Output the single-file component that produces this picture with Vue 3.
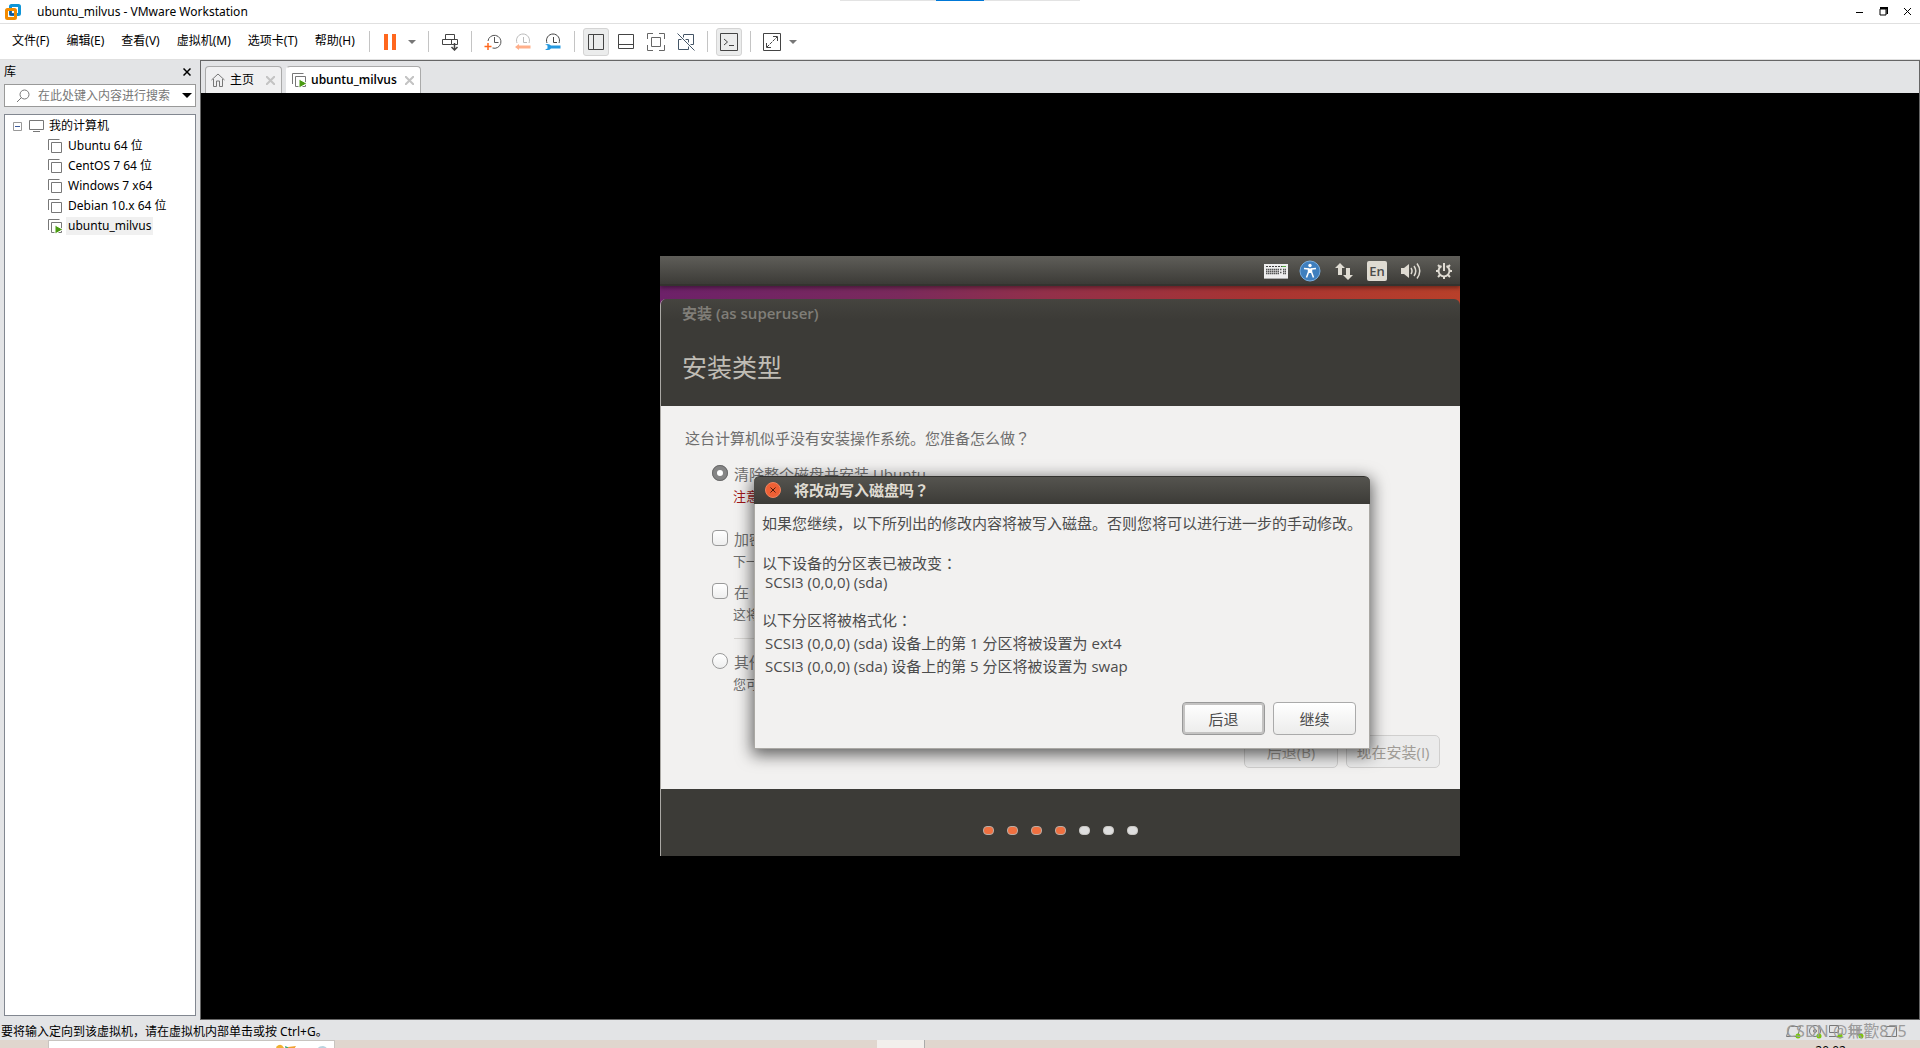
<script setup>
import { ref } from 'vue'

const menus = ['文件(F)', '编辑(E)', '查看(V)', '虚拟机(M)', '选项卡(T)', '帮助(H)']
const machines = [
  { name: 'Ubuntu 64 位', running: false },
  { name: 'CentOS 7 64 位', running: false },
  { name: 'Windows 7 x64', running: false },
  { name: 'Debian 10.x 64 位', running: false },
  { name: 'ubuntu_milvus', running: true }
]
const installType = ref('erase')
const encrypt = ref(false)
const lvm = ref(false)
const steps = 7
const currentStep = 4
</script>

<template>
  <div class="app">
    <div class="snap-bar"><i></i></div>
    <header class="titlebar">
      <svg class="logo" width="18" height="18" viewBox="0 0 18 18" fill="none" stroke-width="3">
        <rect x="6.5" y="2.5" width="9" height="9" rx="1" stroke="#0f95d7" />
        <rect x="2.5" y="6.5" width="9" height="9" rx="1" stroke="#f38b00" />
        <path d="M6.500 8V11.500H10" stroke="#1d4f8c" stroke-width="2" />
      </svg>
      <h1>ubuntu_milvus - VMware Workstation</h1>
      <div class="window-buttons">
        <button aria-label="最小化"><svg width="9" height="9" viewBox="0 0 9 9"><path d="M1 5.500H8" stroke="#000" /></svg></button>
        <button aria-label="还原"><svg width="9" height="9" viewBox="0 0 9 9"><path d="M1 2H7V8H1Z" fill="none" stroke="#000" /><path d="M1 1H8.500V7" fill="none" stroke="#000" stroke-width="2" /></svg></button>
        <button aria-label="关闭"><svg width="9" height="9" viewBox="0 0 9 9"><path d="M1 1L8 8M8 1L1 8" stroke="#000" /></svg></button>
      </div>
    </header>

    <nav class="menubar">
      <div class="menus"><button v-for="m in menus" :key="m">{{ m }}</button></div>
      <span class="sep"></span>
      <button class="tool pause" aria-label="挂起"><svg width="12" height="16" viewBox="0 0 12 16"><path d="M0 0H4V16H0ZM8 0H12V16H8Z" fill="#ff671d" /></svg></button>
      <button class="tool drop" aria-label="电源选项"><svg width="8" height="4" viewBox="0 0 8 4"><path d="M0 0H8L4 4Z" fill="#777" /></svg></button>
      <span class="sep"></span>
      <button class="tool" aria-label="发送 Ctrl+Alt+Del">
        <svg width="18" height="18" viewBox="0 0 18 18" fill="none" stroke="#444"><path d="M4.500 1.500H13.500V6.500H4.500ZM1.500 6.500H10.500V11.500H1.500ZM10.500 6.500H16.500V11.500H10.500" /><path d="M13.500 10V17M10.500 14L13.500 17L16.500 14" stroke-width="1.500" /></svg>
      </button>
      <span class="sep"></span>
      <button class="tool" aria-label="拍摄快照">
        <svg width="20" height="20" viewBox="0 0 20 20" fill="none" stroke="#555"><path d="M5 9A6.500 6.500 0 1 1 9.500 16M11.500 5V10.500H15.500" /><path d="M5 11V18M1.500 14.500H8.500" stroke="#ff671d" stroke-width="1.500" /></svg>
      </button>
      <button class="tool" aria-label="恢复快照">
        <svg width="20" height="20" viewBox="0 0 20 20" fill="none" stroke="#bbb"><path d="M4 11A6.500 6.500 0 1 1 16 11M10.500 5V10.500H14" /><path d="M6 12L2 15L6 18V16.500H17.500V13.500H6Z" fill="#ffaf8a" stroke="none" /></svg>
      </button>
      <button class="tool" aria-label="快照管理器">
        <svg width="20" height="20" viewBox="0 0 20 20" fill="none" stroke="#444"><path d="M4 11A6.500 6.500 0 1 1 16 11M10.500 5V10.500H14" /><path d="M2 12.500Q6 11 8 13.500H17.500V16.500H8Q6 19 2 17.500L4.500 16.500V13.500Z" fill="#2599e0" stroke="none" /></svg>
      </button>
      <span class="sep"></span>
      <button class="tool on" aria-label="显示库"><svg width="18" height="18" viewBox="0 0 18 18" fill="none" stroke="#444"><path d="M1.500 1.500H16.500V16.500H1.500ZM6.500 1.500V16.500" /></svg></button>
      <button class="tool" aria-label="缩略图栏"><svg width="18" height="18" viewBox="0 0 18 18" fill="none" stroke="#444"><path d="M1.500 1.500H16.500V15.500H1.500ZM1.500 11.500H16.500" /></svg></button>
      <button class="tool" aria-label="全屏"><svg width="18" height="18" viewBox="0 0 18 18" fill="none" stroke="#666"><path d="M.500 6V.500H6M12 .500H17.500V6M17.500 12V17.500H12M6 17.500H.500V12M4.500 4.500H13.500V13.500H4.500Z" /></svg></button>
      <button class="tool" aria-label="Unity"><svg width="18" height="18" viewBox="0 0 18 18" fill="none" stroke="#445566"><path d="M7 1.500H16.500V11.500H13M1.500 6.500H11.500V16.500H1.500ZM6.500 6.500V1.500" /><path d="M.500 .500L17.500 17.500" stroke="#fff" stroke-width="3" /><path d="M.500 .500L17.500 17.500" /></svg></button>
      <span class="sep"></span>
      <button class="tool on" aria-label="控制台视图"><svg width="18" height="18" viewBox="0 0 18 18" fill="none" stroke="#444"><path d="M.500 .500H17.500V17.500H.500Z" /><path d="M4 6L7.500 9L4 12M9 12.500H14" /></svg></button>
      <span class="sep"></span>
      <button class="tool" aria-label="拉伸客户机"><svg width="18" height="18" viewBox="0 0 18 18" fill="none" stroke="#444"><path d="M.500 .500H17.500V17.500H.500Z" /><path d="M3.500 10V14.500H8M10 3.500H14.500V8" /><path d="M4 14L14 4" stroke-dasharray="3 1" /></svg></button>
      <button class="tool drop" aria-label="拉伸选项"><svg width="8" height="4" viewBox="0 0 8 4"><path d="M0 0H8L4 4Z" fill="#777" /></svg></button>
    </nav>

    <div class="workspace">
      <aside class="library">
        <div class="library-head">
          <h2>库</h2>
          <button aria-label="关闭库"><svg width="8" height="8" viewBox="0 0 8 8"><path d="M.500 .500L7.500 7.500M7.500 .500L.500 7.500" stroke="#000" stroke-width="1.500" /></svg></button>
        </div>
        <label class="search">
          <svg width="14" height="14" viewBox="0 0 14 14" fill="none" stroke="#777"><circle cx="8.500" cy="5.500" r="4.500" /><path d="M5.500 8.500L1 13" /></svg>
          <input type="text" aria-label="搜索" placeholder="在此处键入内容进行搜索" />
          <svg width="10" height="5" viewBox="0 0 10 5"><path d="M0 0H10L5 5Z" fill="#000" /></svg>
        </label>
        <div class="tree">
          <div class="root">
            <svg width="9" height="9" viewBox="0 0 9 9" fill="#fff" stroke="#999"><path d="M.500 .500H8.500V8.500H.500Z" /><path d="M2 4.500H7" stroke="#3a5a9c" /></svg>
            <svg width="15" height="12" viewBox="0 0 15 12" fill="none" stroke="#777"><path d="M.500 .500H14.500V9.500H.500ZM4 11.500H11" /></svg>
            <span>我的计算机</span>
          </div>
          <ul>
            <li v-for="m in machines" :key="m.name">
              <svg width="15" height="15" viewBox="0 0 15 15" fill="none" stroke="#777"><path d="M.500 11V.500H11.500M3.500 3.500H13.500V13.500H3.500Z" /><path v-if="m.running" d="M7 6L15 10.500L7 15Z" fill="#4a9a12" stroke="#fff" /></svg>
              <span :class="{ selected: m.running }">{{ m.name }}</span>
            </li>
          </ul>
        </div>
      </aside>

      <main class="stage">
        <div class="tabs">
          <div class="tab">
            <svg width="14" height="14" viewBox="0 0 14 14" fill="none" stroke="#777"><path d="M.500 7L7 1L13.500 7M2.500 6V13.500H5.500V8H8.500V13.500H11.500V6" /></svg>
            <span>主页</span>
            <button aria-label="关闭主页"><svg width="9" height="9" viewBox="0 0 9 9"><path d="M0 0L9 9M9 0L0 9" stroke="#c3c3c3" stroke-width="2" /></svg></button>
          </div>
          <div class="tab active">
            <svg width="15" height="15" viewBox="0 0 15 15" fill="none" stroke="#777"><path d="M.500 11V.500H11.500M3.500 3.500H13.500V13.500H3.500Z" /><path d="M7 6L15 10.500L7 15Z" fill="#4a9a12" stroke="#fff" /></svg>
            <span>ubuntu_milvus</span>
            <button aria-label="关闭 ubuntu_milvus"><svg width="9" height="9" viewBox="0 0 9 9"><path d="M0 0L9 9M9 0L0 9" stroke="#c3c3c3" stroke-width="2" /></svg></button>
          </div>
        </div>

        <div class="screen">
          <section class="guest">
            <div class="panel">
              <svg class="keyboard" width="24" height="15" viewBox="0 0 24 15"><path d="M0 0H24V15H0Z" fill="#eee" /><path d="M2 2.500H18M20 2.500H22" stroke="#444" stroke-dasharray="2 1" /><path d="M18 2.500H22" stroke="#5a4" /><path d="M2 5.500H15M2 7.500H15M2 9.500H15M16 5.500H18M16 8.500H18M19 5.500H22M19 7.500H22M19 9.500H22" stroke="#555" stroke-width="1.500" stroke-dasharray="1.500 .500" /><path d="M0 14.500H24" stroke="#aaa" /></svg>
              <svg width="22" height="22" viewBox="0 0 22 22"><circle cx="11" cy="11" r="10" fill="#3f7fbe" stroke="#79aee0" /><circle cx="11" cy="5.500" r="1.700" fill="#fff" /><path d="M5 8.500L9.500 9V12L7.500 17.500M17 8.500L12.500 9V12L14.500 17.500" fill="none" stroke="#fff" stroke-width="1.500" /><path d="M9 8.500H13V13H9Z" fill="#fff" /></svg>
              <svg width="18" height="17" viewBox="0 0 18 17" fill="#dfdbd2"><path d="M5 0L10 5H7V12H3V5H0ZM13 17L8 12H11V5H15V12H18Z" /></svg>
              <span class="lang">En</span>
              <svg width="21" height="18" viewBox="0 0 21 18" fill="none" stroke="#dfdbd2" stroke-width="1.500"><path d="M0 6H3L8 2V16L3 12H0Z" fill="#dfdbd2" stroke="none" /><path d="M10 6Q12 9 10 12M13 4Q16.500 9 13 14M16 1.500Q21.500 9 16 16.500" /></svg>
              <svg width="16" height="16" viewBox="0 0 16 16" fill="none" stroke="#dfdbd2"><path d="M5.500 3A5.500 5.500 0 1 0 10.500 3" stroke-width="2" /><path d="M8 0V8" stroke-width="2" /><path d="M0 8H3M13 8H16M8 13V16M2 2L4.500 4.500M14 2L11.500 4.500M2 14L4.500 11.500M14 14L11.500 11.500" stroke-width="2" /></svg>
            </div>
            <div class="installer">
              <div class="installer-head">
                <p>安装 (as superuser)</p>
                <h2>安装类型</h2>
              </div>
              <form class="installer-body" @submit.prevent>
                <p class="question">这台计算机似乎没有安装操作系统。您准备怎么做<span class="mark">？</span></p>
                <div class="option">
                  <input id="erase" v-model="installType" type="radio" value="erase" />
                  <label for="erase">清除整个磁盘并安装 Ubuntu</label>
                </div>
                <p class="note warning">注意</p>
                <div class="option gap">
                  <input id="encrypt" v-model="encrypt" type="checkbox" />
                  <label for="encrypt">加密</label>
                </div>
                <p class="note">下一</p>
                <div class="option">
                  <input id="lvm" v-model="lvm" type="checkbox" />
                  <label for="lvm">在 U</label>
                </div>
                <p class="note">这将</p>
                <hr />
                <div class="option">
                  <input id="other" v-model="installType" type="radio" value="other" />
                  <label for="other">其他</label>
                </div>
                <p class="note">您可</p>
                <div class="wizard-buttons">
                  <button disabled>后退(B)</button>
                  <button disabled>现在安装(I)</button>
                </div>
              </form>
              <div class="installer-foot">
                <i v-for="n in steps" :key="n" :class="{ done: n <= currentStep }"></i>
              </div>
            </div>

            <div class="dialog" role="dialog" aria-labelledby="dialog-title">
              <div class="dialog-title">
                <button aria-label="关闭对话框"><svg width="16" height="16" viewBox="0 0 16 16"><circle cx="8" cy="8" r="7.500" fill="#ee6035" stroke="#f0845f" /><path d="M5.500 5.500L10.500 10.500M10.500 5.500L5.500 10.500" stroke="#4a1c0c" /></svg></button>
                <h3 id="dialog-title">将改动写入磁盘吗<span class="mark">？</span></h3>
              </div>
              <div class="dialog-body">
                <p>如果您继续，以下所列出的修改内容将被写入磁盘。否则您将可以进行进一步的手动修改。</p>
                <p class="para">以下设备的分区表已被改变<span class="mark">：</span></p>
                <p class="item close">SCSI3 (0,0,0) (sda)</p>
                <p class="para list">以下分区将被格式化<span class="mark">：</span></p>
                <p class="item">SCSI3 (0,0,0) (sda) 设备上的第 1 分区将被设置为 ext4</p>
                <p class="item">SCSI3 (0,0,0) (sda) 设备上的第 5 分区将被设置为 swap</p>
                <div class="dialog-buttons">
                  <button class="focused">后退</button>
                  <button>继续</button>
                </div>
              </div>
            </div>
          </section>
        </div>
      </main>
    </div>

    <footer class="statusbar">
      <span>要将输入定向到该虚拟机，请在虚拟机内部单击或按 Ctrl+G。</span>
      <div class="devices">
        <svg width="112" height="16" viewBox="0 0 112 16" fill="none" stroke="#777"><path d="M3.500 2.500H14.500L11.500 12.500H.500ZM43.500 1.500H52.500V8.500H43.500ZM43 12.500H55M65 3V12M72 3V12M98.500 2.500H110.500V12.500H98.500" /><circle cx="29" cy="7" r="5.500" /><circle cx="29" cy="7" r="1.500" /><path d="M65 6H76M65 10H76" /><g fill="#7ac70c" stroke="none"><circle cx="12" cy="12" r="2.500" /><circle cx="33" cy="12" r="2.500" /><circle cx="54" cy="12" r="2.500" /><circle cx="75" cy="12" r="2.500" /></g></svg>
        <span class="watermark">CSDN @無歡875</span>
      </div>
    </footer>
    <div class="taskbar">
      <div class="task">
        <svg width="52" height="8" viewBox="0 0 52 8"><path d="M0 4Q5 -1 8 5L2 8Z" fill="#f0b030" /><path d="M9 3L14 5L10 8Z" fill="#3ba776" /><path d="M12 4L20 3L17 8H13Z" fill="#f0a030" /><path d="M41 8Q41 3 47 3Q52 4 51 8Z" fill="#b9d3df" /></svg>
      </div>
      <div class="task-active"></div>
      <time>20:02</time>
    </div>
  </div>
</template>

<style>
body { background: #e3e4e6; }
</style>

<style scoped>
* { box-sizing: border-box; }
h1, h2, h3, p, ul { margin: 0; padding: 0; font-weight: normal; font-size: inherit; }
svg { display: block; flex: none; }
button { margin: 0; padding: 0; border: 0; background: none; font: inherit; color: inherit; }
.app {
  display: flex; flex-direction: column; height: 100vh; overflow: hidden; position: relative;
  font: 12px/16px "Noto Sans", "Noto Sans CJK SC", sans-serif; color: #000; background: #e3e4e6;
}
.snap-bar { position: absolute; top: 0; left: 50%; width: 240px; margin-left: -120px; height: 1px; background: #e3e3e3; display: flex; justify-content: center; }
.snap-bar i { width: 48px; background: #0078d7; }

.titlebar { display: flex; align-items: center; height: 24px; background: #fff; border-bottom: 1px solid #e0e0e0; padding: 0 8px 0 4px; }
.titlebar h1 { margin-left: 15px; flex: 1; }
.window-buttons { display: flex; gap: 15px; }

.menubar { display: flex; align-items: center; height: 36px; background: #fff; border-bottom: 1px solid #e0e0e0; padding-left: 12px; }
.menus { display: flex; gap: 17px; padding-bottom: 2px; }
.sep { width: 1px; height: 21px; background: #c4c4c4; margin: 0 8px; }
.menus + .sep { margin: 0 3px 0 14px; }
.drop + .sep { margin-left: 12px; }
.tool { width: 26px; height: 28px; margin-right: 4px; display: flex; align-items: center; justify-content: center; }
.tool:has(+ .sep) { margin-right: 0; }
.tool.on { background: #ebecec; border: 1px solid #d4d4d4; border-radius: 3px; }
.tool.pause { width: 35px; margin-right: 0; }
.tool.drop { width: 8px; }

.workspace { display: flex; flex: 1; min-height: 0; }
.library { width: 200px; padding: 0 4px 4px; display: flex; flex-direction: column; }
.library-head { display: flex; align-items: center; justify-content: space-between; height: 24px; padding-right: 5px; }
.search { display: flex; align-items: center; height: 23px; background: #fff; border: 1px solid #999; padding: 0 3px 0 11px; }
.search input { flex: 1; min-width: 0; border: 0; outline: 0; padding: 0 0 0 8px; font: inherit; background: none; }
.search input::placeholder { color: #777; opacity: 1; }
.tree { flex: 1; margin-top: 7px; border: 1px solid #828790; background: #fff; padding-top: 1px; }
.root { display: flex; align-items: center; height: 20px; padding-left: 8px; }
.root svg + svg { margin-left: 7px; }
.root span { margin-left: 5px; }
.tree ul { list-style: none; }
.tree li { display: flex; align-items: center; height: 20px; padding-left: 43px; }
.tree li span { margin-left: 3px; padding: 1px 2px; }
.tree li .selected { background: #f0f0f0; }

.stage { flex: 1; min-width: 0; display: flex; flex-direction: column; border: 1px solid #666; }
.tabs { display: flex; align-items: flex-end; gap: 4px; height: 32px; padding-left: 4px; }
.tab { display: flex; align-items: center; height: 27px; padding: 0 6px 0 5px; border: 1px solid #aaa; border-bottom: 0; border-radius: 4px 4px 0 0; background: #f0f0f1; }
.tab span { margin: 0 12px 0 5px; }
.tab.active { background: #fff; font-family: "Open Sans", sans-serif; font-weight: 600; border-left-color: #fff; }
.tab.active span { margin: 0 8px 0 4px; }
.screen { flex: 1; display: flex; align-items: center; justify-content: center; background: #000; }

.guest { position: relative; width: 800px; color: #4c4c4c; font: 15px/22px "Open Sans", "Noto Sans CJK SC", sans-serif; background: linear-gradient(90deg, #6d2169, #7a2a5c 30%, #92304a 48%, #a83432 75%, #b8402a); }
.mark { font-family: "Noto Sans CJK JP", sans-serif; }
.panel { display: flex; align-items: center; justify-content: flex-end; gap: 14px; height: 30px; padding: 2px 8px 0 0; background: linear-gradient(#5f5e59, #3c3b37); border-bottom: 2px solid #34332f; box-shadow: 0 2px 4px #0006; }
.keyboard { margin-right: -3px; }
.lang { width: 20px; height: 20px; border-radius: 2px; background: #dfdbd2; color: #4c4c4c; font-size: 13px; line-height: 20px; font-weight: 600; text-align: center; }
.installer { margin-top: 13px; border-left: 1px solid #aaa8a4; border-radius: 6px 6px 0 0; overflow: hidden; }
.installer-head { height: 107px; background: linear-gradient(#45443f, #3c3b37 20px); padding: 3px 21px; }
.installer-head p { font-weight: 600; color: #807e78; }
.installer-head h2 { margin-top: 25px; font-size: 25px; line-height: 36px; color: #c0bdb5; }
.installer-body { background: #f2f1f0; height: 383px; padding: 21px 20px 21px 24px; color: #6e6e6e; display: flex; flex-direction: column; }
.question { margin-bottom: 13px; }
.option { display: flex; align-items: center; height: 22px; padding-left: 27px; }
.option.gap { margin-top: 12px; }
.option input { appearance: none; flex: none; width: 16px; height: 16px; margin: 0 6px 0 0; border: 1px solid #999; border-radius: 4px; background: linear-gradient(#fff, #eee); }
.option input[type="radio"] { border-radius: 50%; }
.option input[type="radio"]:checked { border: 5px solid #858585; background: #fff; outline: 1px solid #6a6a6a; outline-offset: -1px; }
.option label { padding-top: 2px; }
.note { height: 31px; padding-left: 48px; font-size: 13px; line-height: 24px; }
.note.warning { color: #a01515; }
.installer-body hr { margin: 5px 0 11px 49px; width: 500px; border: 0; border-top: 1px solid #d8d6d3; }
.wizard-buttons { display: flex; justify-content: flex-end; gap: 8px; margin-top: auto; }
.wizard-buttons button { width: 94px; height: 33px; border: 1px solid #d0cfce; border-radius: 5px; background: #ebebeb; color: #a09c96; }
.installer-foot { display: flex; align-items: center; justify-content: center; gap: 13px; height: 67px; padding-top: 16px; background: #3c3b37; }
.installer-foot i { width: 11px; height: 9px; border-radius: 4px; border: 1px solid #c8c6c2; background: #dedede; }
.installer-foot .done { background: #f07040; border-color: #b8aca4; }

.dialog { position: absolute; left: 94px; top: 220px; width: 616px; border-radius: 6px 6px 0 0; background: #f2f1f0; box-shadow: 0 4px 16px 2px #0009; border: 1px solid #aaa8a4; border-top: 0; }
.dialog-title { display: flex; align-items: center; height: 28px; margin: 0 -1px; padding: 0 0 1px 11px; border-radius: 6px 6px 0 0; border-top: 1px solid #33322f; background: linear-gradient(#55544f, #3c3b37); color: #dfdbd2; }
.dialog-title h3 { margin-left: 13px; padding-bottom: 1px; font-weight: bold; }
.dialog-body { padding: 8px 13px 13px 7px; }
.dialog-body p { white-space: nowrap; }
.dialog-body .para { margin-top: 18px; }
.dialog-body .list { margin-bottom: 1px; }
.dialog-body .item { margin-left: 3px; line-height: 23px; }
.dialog-body .item.close { line-height: 17px; }
.dialog-buttons { display: flex; justify-content: flex-end; gap: 8px; margin-top: 24px; }
.dialog-buttons button { width: 83px; height: 33px; border: 1px solid #aaa; border-radius: 4px; background: linear-gradient(#fff, #ececeb); }
.dialog-buttons .focused { border: 1px solid #999; box-shadow: inset 0 0 0 2px #c4c3c2; }

.statusbar { display: flex; align-items: center; justify-content: space-between; height: 20px; padding: 3px 22px 0 1px; }
.devices { position: relative; }
.watermark { position: absolute; left: 0; top: -3px; font-size: 16px; line-height: 20px; color: #9b9b9b; white-space: nowrap; }
.taskbar { display: flex; position: relative; height: 8px; overflow: hidden; background: #e0d6ce; }
.task { width: 287px; margin-left: 48px; padding: 2px 0 0 227px; background: #fff; border: solid #c8c4c0; border-width: 1px 1px 0; }
.task-active { width: 48px; margin-left: 542px; background: #f2efec; border-right: 1px solid #aaa; }
.taskbar time { margin: 4px 74px 0 auto; line-height: 14px; }
</style>
